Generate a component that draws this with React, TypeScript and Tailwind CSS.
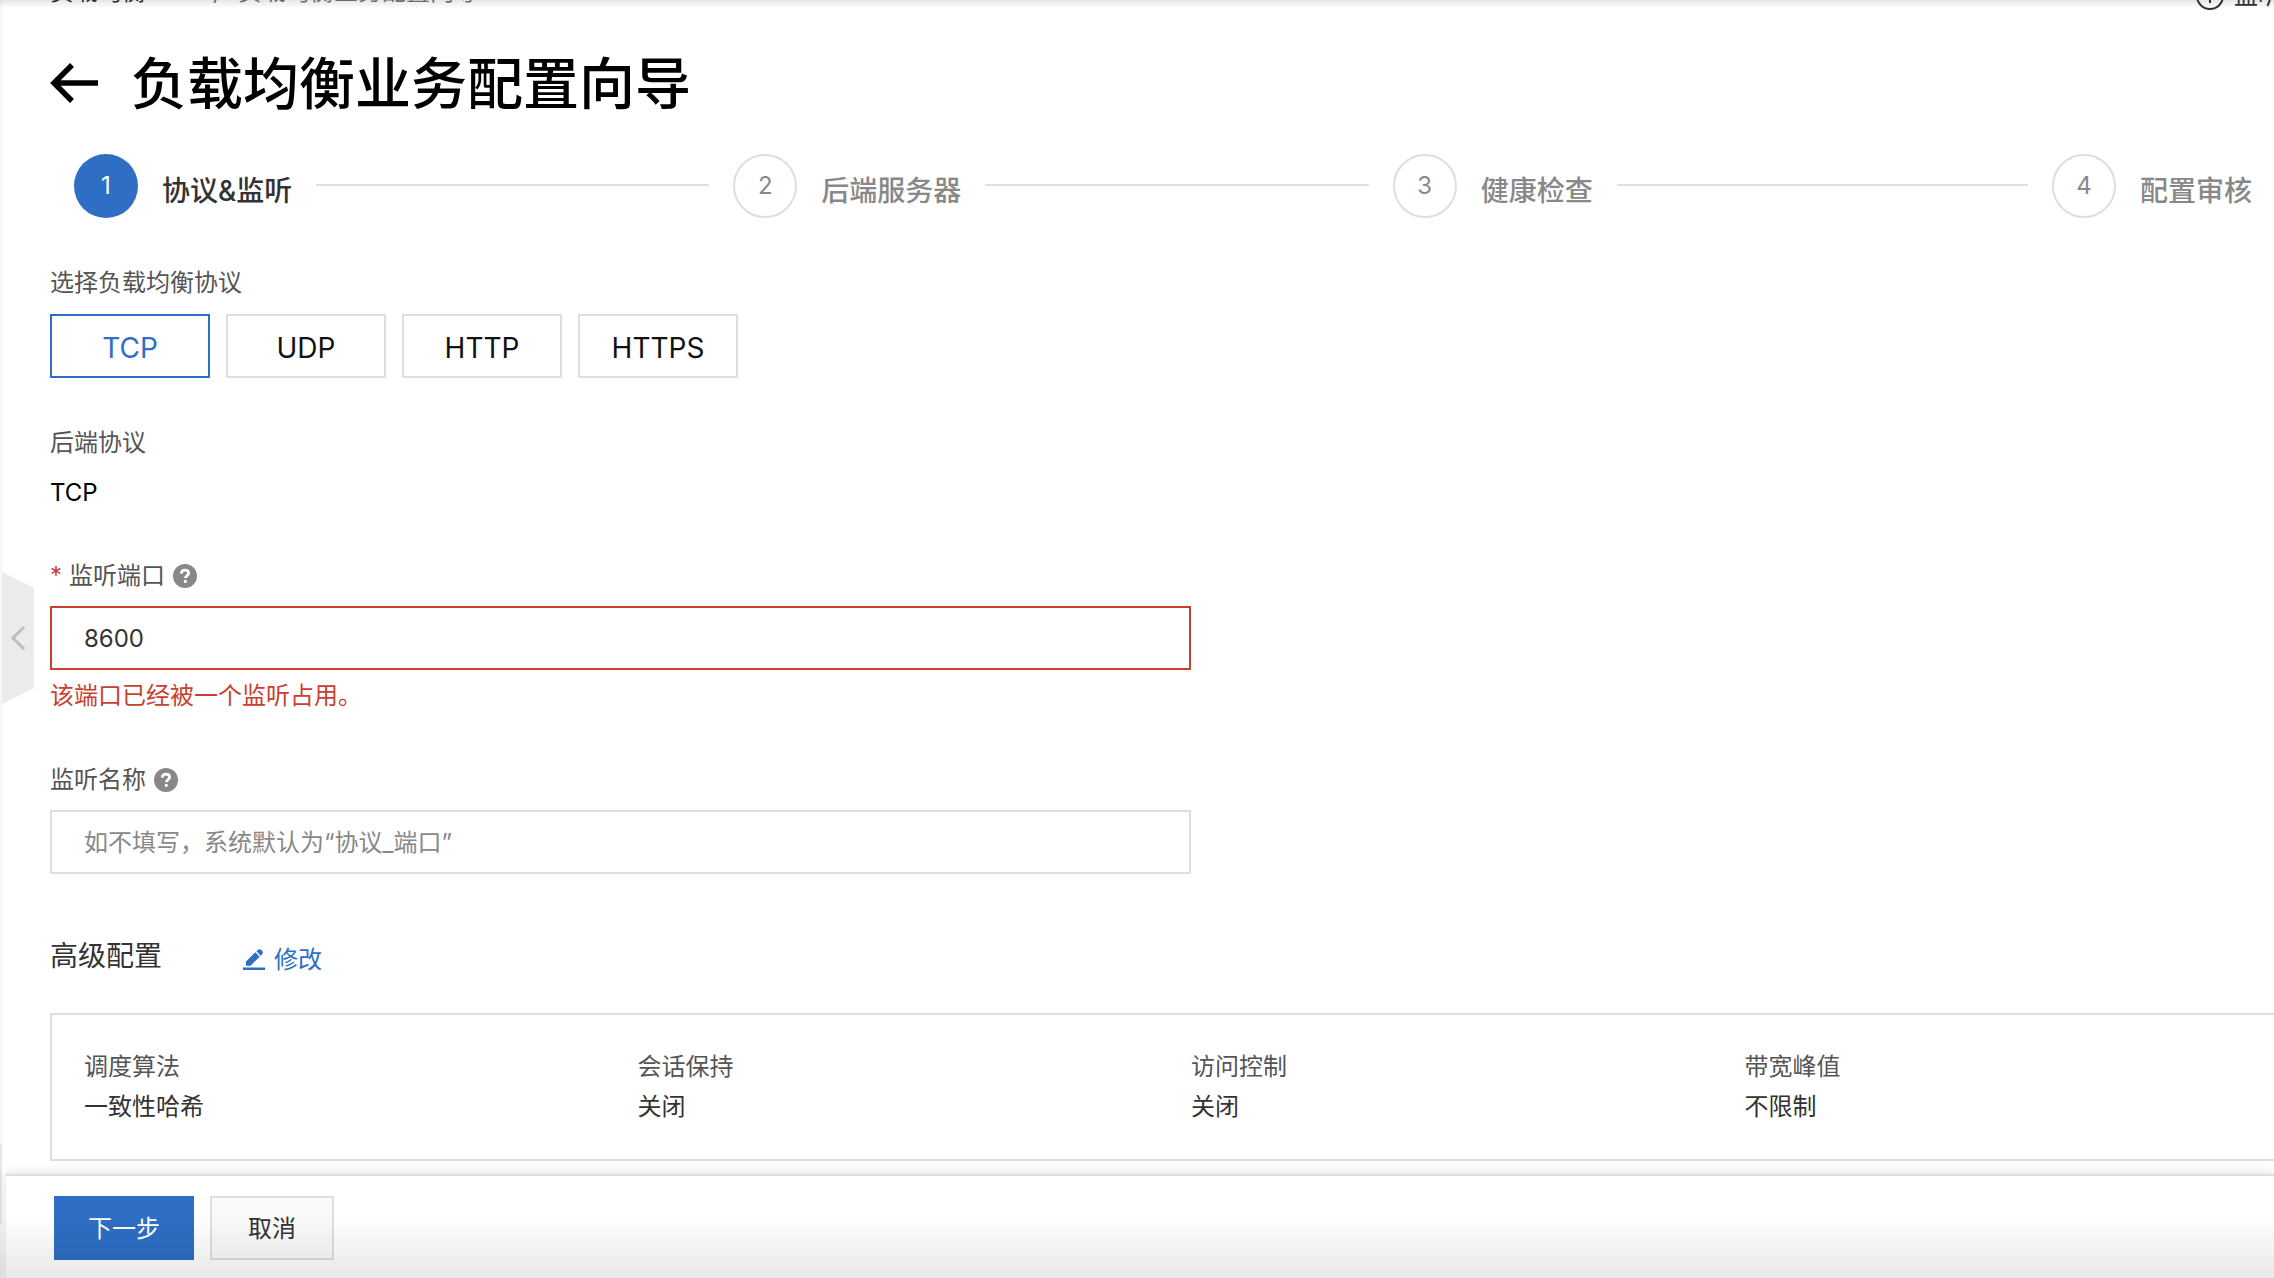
import React, { useState } from "react";

const protocols = ["TCP", "UDP", "HTTP", "HTTPS"];
const steps = ["协议&监听", "后端服务器", "健康检查", "配置审核"];
const summary = [
  ["调度算法", "一致性哈希"],
  ["会话保持", "关闭"],
  ["访问控制", "关闭"],
  ["带宽峰值", "不限制"],
];

function HelpIcon() {
  return (
    <svg viewBox="0 0 24 24" className="size-6 shrink-0" role="img" aria-label="帮助">
      <circle cx="12" cy="12" r="12" fill="#888" />
      <path d="M8.3 9.6C8.4 7.3 10 6.2 12 6.2c2.100 0 3.600 1.200 3.600 3 0 2.400-3 2.500-3.200 5" fill="none" stroke="#fff" strokeWidth="2.800" />
      <rect x="10.900" y="16" width="2.800" height="2.800" fill="#fff" />
    </svg>
  );
}

export default function App() {
  const [protocol, setProtocol] = useState("TCP");
  const [port, setPort] = useState("8600");
  const [name, setName] = useState("");

  return (
    <div className="relative flex h-screen flex-col overflow-hidden bg-white font-[Inter,'Noto_Sans_CJK_SC',sans-serif] text-2xl leading-10 text-[#333]">
      <div className="absolute inset-y-0 left-0 w-0.5 bg-[#f7f7f7]" />
      <div className="absolute bottom-[54px] left-0 h-20 w-0.5 bg-[#e6e6e6]" />
      <div className="absolute inset-x-0 top-0 z-10 h-2 bg-linear-to-b from-black/10 to-transparent" />
      <button
        type="button"
        aria-label="收起"
        className="absolute top-[572px] left-0.5 flex h-33 w-8 items-center justify-center bg-[#ebebeb] [clip-path:polygon(0_0,100%_16px,100%_116px,0_100%)]"
      >
        <svg viewBox="0 0 16 24" className="h-6 w-4" fill="none" stroke="#bfbfbf" strokeWidth="3">
          <path d="M14 1 3 12l11 11" />
        </svg>
      </button>

      <main className="min-h-0 flex-1 overflow-hidden pl-[50px]">
        <div className="-mt-7 flex h-10 items-center justify-between">
          <nav aria-label="面包屑" className="flex">
            <a href="#slb" className="w-[163px]">负载均衡 SLB</a>
            <span className="w-[25px] text-[#777]">/</span>
            <span className="text-[#777]">负载均衡业务配置向导</span>
          </nav>
          <a href="#help" className="-mr-14 flex shrink-0 items-center gap-2.5 pt-2">
            <svg viewBox="0 0 28 28" className="size-7" fill="none" stroke="#333" strokeWidth="2">
              <circle cx="14" cy="14" r="13" />
              <path d="M10.500 11c0-5 7-5 7-.5 0 2.500-3.500 2.500-3.500 5.500M14 18v3" />
            </svg>
            监听介绍
          </a>
        </div>

        <header className="mt-[31px] flex h-20 items-center gap-[33px]">
          <button type="button" aria-label="返回">
            <svg viewBox="0 0 48 40" className="h-10 w-12" fill="none" stroke="#000" strokeWidth="5.500">
              <path d="M22 2 4 20l18 18M3 20h45" />
            </svg>
          </button>
          <h1 className="pt-0.5 text-[56px] leading-20 font-medium text-black">负载均衡业务配置向导</h1>
        </header>

        <ol className="mt-[31px] mr-[22px] ml-6 flex h-16">
          {steps.map((step, i) => (
            <li key={step} className={i < 3 ? "flex flex-1 items-center" : "flex items-center"}>
              <span
                className={
                  i === 0
                    ? "flex size-16 shrink-0 items-center justify-center rounded-full bg-[#2e6ec5] text-white"
                    : "flex size-16 shrink-0 items-center justify-center rounded-full border-2 border-[#dedede] text-[#888]"
                }
              >
                {i + 1}
              </span>
              <span
                className={
                  i === 0
                    ? "ml-6 pt-2.5 text-[28px] font-medium whitespace-nowrap"
                    : "ml-6 pt-2.5 text-[28px] font-medium whitespace-nowrap text-[#888]"
                }
              >
                {step}
              </span>
              {i < 3 && <span className="mx-6 mb-0.5 h-0.5 flex-1 bg-[#dedede]" />}
            </li>
          ))}
        </ol>

        <div className="-mr-[58px]">
          <fieldset className="mt-[45px]">
            <legend className="text-[#555]">选择负载均衡协议</legend>
            <div className="mt-[11px] flex gap-4">
              {protocols.map((p) => (
                <button
                  key={p}
                  type="button"
                  aria-pressed={p === protocol}
                  onClick={() => setProtocol(p)}
                  className={
                    p === protocol
                      ? "h-16 w-40 border-2 border-[#2e6ec5] pt-1 text-[28px] text-[#2e6ec5]"
                      : "h-16 w-40 border-2 border-[#dedede] pt-1 text-[28px] text-[#111]"
                  }
                >
                  {p}
                </button>
              ))}
            </div>
          </fieldset>

          <div className="mt-[45px]">
            <div className="text-[#555]">后端协议</div>
            <div className="mt-2.5 text-black">{protocol}</div>
          </div>

          <div className="mt-[43px]">
            <div className="flex items-center gap-2">
              <label htmlFor="port" className="text-[#555]">
                <span className="inline-block w-[19px] text-[#c93f30]">*</span>监听端口
              </label>
              <HelpIcon />
            </div>
            <input
              id="port"
              value={port}
              aria-invalid="true"
              aria-describedby="port-error"
              onChange={(e) => setPort(e.target.value)}
              className="mt-2.5 block h-16 w-1/2 border-2 border-[#c93f30] px-8 outline-none"
            />
            <p id="port-error" className="mt-1.5 text-[#c93f30]">该端口已经被一个监听占用。</p>
          </div>

          <div className="mt-11">
            <div className="flex items-center gap-2">
              <label htmlFor="name" className="text-[#555]">监听名称</label>
              <HelpIcon />
            </div>
            <input
              id="name"
              value={name}
              placeholder="如不填写，系统默认为“协议_端口”"
              onChange={(e) => setName(e.target.value)}
              className="mt-2.5 block h-16 w-1/2 border-2 border-[#dedede] px-8 outline-none placeholder:text-[#888]"
            />
          </div>

          <section className="mt-[58px]">
            <div className="flex items-center gap-20">
              <h2 className="text-[28px]">高级配置</h2>
              <button type="button" className="flex items-center gap-2 pt-2 text-[#2e6ec5]">
                <svg viewBox="0 0 24 24" className="size-6" fill="currentColor">
                  <path d="M1 19.500h22v2.500H1zM4 13.500 13.300 4.300 17.700 8.700 8.500 17.700H4zM14.400 3.300l1.300-1.300c1.100-1.100 2.500-1.100 3.600 0l.8.8c1.100 1.100 1 2.500 0 3.600l-1.300 1.300z" />
                </svg>
                修改
              </button>
            </div>
            <dl className="mt-[33px] grid grid-cols-4 border-2 border-[#dedede] px-8 py-8">
              {summary.map(([term, value]) => (
                <div key={term}>
                  <dt className="text-[#555]">{term}</dt>
                  <dd>{value}</dd>
                </div>
              ))}
            </dl>
          </section>
        </div>
      </main>

      <footer className="z-10 ml-1.5 flex h-[104px] shrink-0 gap-4 border-t-2 border-[#dedede] bg-white px-12 pt-5 shadow-[0_0_12px_rgba(0,0,0,0.15)]">
        <button type="button" className="h-16 w-35 bg-[#2e6ec5] pt-0.5 text-white">下一步</button>
        <button type="button" className="h-16 w-31 border-2 border-[#dedede] bg-[#fafafa] pt-0.5">取消</button>
      </footer>
      <div className="pointer-events-none absolute inset-x-0 bottom-0 z-20 h-16 bg-linear-to-b from-transparent to-black/9" />
    </div>
  );
}
